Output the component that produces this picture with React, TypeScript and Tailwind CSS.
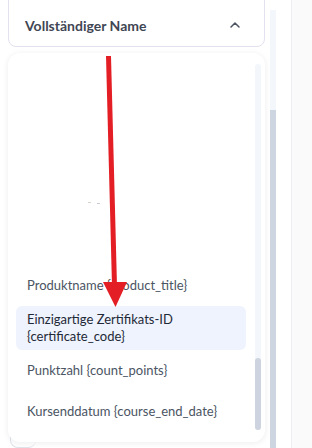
import { ChevronUp } from 'lucide-react'

const items = [
  { label: 'Produktname {product_title}', active: false },
  { label: 'Einzigartige Zertifikats-ID {certificate_code}', active: true },
  { label: 'Punktzahl {count_points}', active: false },
  { label: 'Kursenddatum {course_end_date}', active: false },
]

export default function App() {
  return (
    <div className="relative flex h-[448px] w-[312px] overflow-hidden bg-white font-['Lato',sans-serif]">
      {/* Left panel */}
      <div className="relative flex w-[292px] border-r border-[#eceef1]">
        <div className="flex w-[270px] flex-col pl-2 pr-[5px]">
          {/* Select trigger */}
          <div className="-mt-[10px] flex h-[57px] items-end rounded-lg border border-[#e3e1ee] bg-white">
            <div className="flex h-[47px] w-full items-center justify-between pb-[1px] pl-4 pr-[21px] pt-[6px]">
              <span className="text-[14px] font-bold text-[#3f4654]">Vollständiger Name</span>
              <ChevronUp className="h-[16px] w-[16px] text-[#4b5360]" strokeWidth={2.25} />
            </div>
          </div>

          {/* Dropdown */}
          <div className="relative mt-[6px] flex h-[389px] rounded-xl bg-white shadow-[0_1px_6px_rgba(15,23,42,0.08)]">
            <div className="flex flex-1 flex-col pl-2 pr-[9px]">
              <div className="relative h-[212px]">
                <div className="absolute left-[72px] top-[149px] flex gap-[6px]">
                  <span className="h-[1px] w-[3px] bg-[#d8d4cc]" />
                  <span className="mt-[1px] h-[1px] w-[3px] bg-[#c9ccd2]" />
                </div>
              </div>
              {items.map((item) =>
                item.active ? (
                  <div
                    key={item.label}
                    className="rounded-md bg-[#eef3fd] px-[11px] py-[5px] text-[13px] leading-[17px] text-[#1f2937]"
                  >
                    Einzigartige Zertifikats-ID
                    <br />
                    {'{certificate_code}'}
                  </div>
                ) : (
                  <div
                    key={item.label}
                    className="px-[11px] py-[12px] text-[13px] leading-[17px] text-[#4b5563]"
                  >
                    {item.label}
                  </div>
                )
              )}
            </div>
            {/* Inner scrollbar */}
            <div className="mr-[4px] mt-[11px] flex h-[366px] w-[6px] flex-col justify-end rounded-full bg-[#f3f7fc]">
              <div className="h-[72px] w-[6px] rounded-full bg-[#cdd4df]" />
            </div>
          </div>

          <div className="ml-[2px] mt-[-6px] h-[12px] w-[26px] rounded-b-lg border-b border-l border-[#dfe3ea]" />
        </div>

        {/* Outer scrollbar */}
        <div className="mt-[10px] flex h-[438px] w-[6px] flex-col bg-[#f3f7fc]">
          <div className="mt-[100px] flex-1 bg-[#cdd5e0]" />
        </div>
      </div>

      <div className="flex-1 bg-[#fafafa]" />

      {/* Red annotation arrow */}
      <svg className="pointer-events-none absolute left-0 top-0" width="312" height="448" viewBox="0 0 312 448">
        <line x1="108.5" y1="56" x2="114.5" y2="286" stroke="#e41e25" strokeWidth="5" />
        <polygon points="103,282 127,282 115.5,307" fill="#e41e25" />
      </svg>
    </div>
  )
}
